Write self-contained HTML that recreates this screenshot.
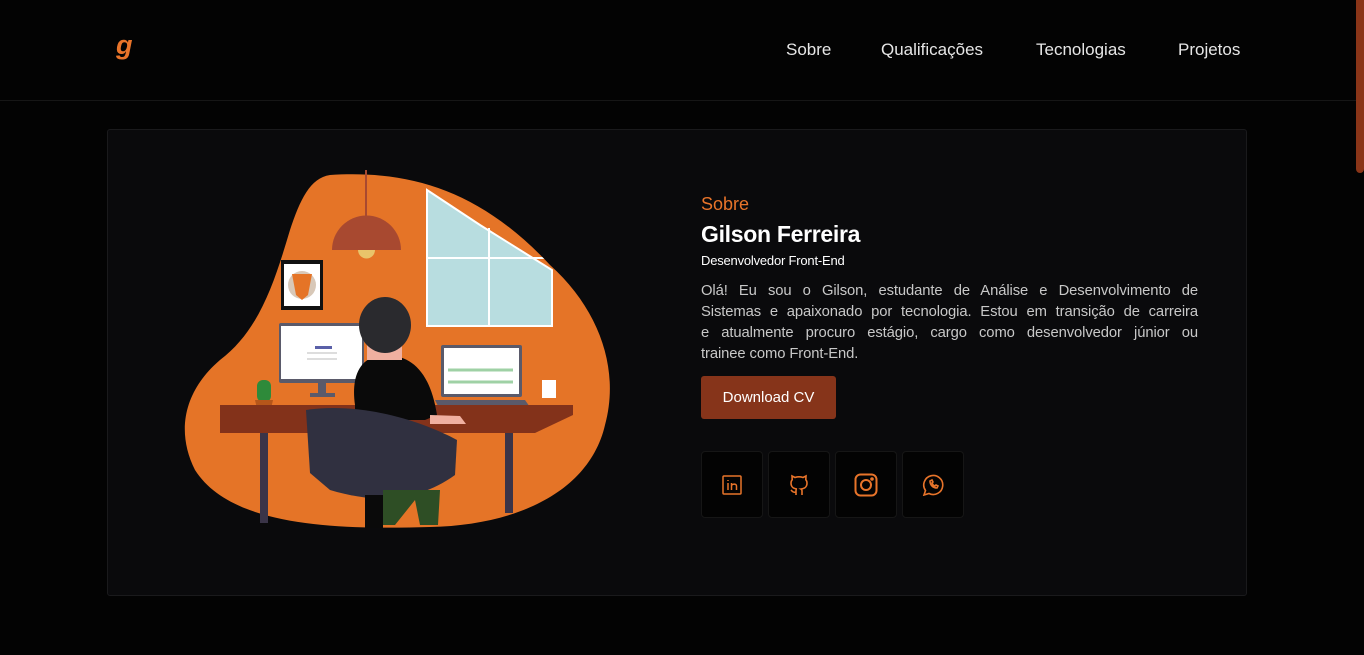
<!DOCTYPE html>
<html><head><meta charset="utf-8"><style>
*{margin:0;padding:0;box-sizing:border-box}
body{width:1364px;height:655px;background:#030303;font-family:"Liberation Sans",sans-serif;overflow:hidden;position:relative}
.hdr{position:absolute;left:0;top:0;width:1356px;height:101px;border-bottom:1px solid #161616}
.logo{position:absolute;left:116px;top:30px;color:#e8742a;font:italic bold 27px "Liberation Sans",sans-serif}
.nav a{position:absolute;top:40px;color:#e6e6e6;font-size:17px;text-decoration:none}
.sb{position:absolute;right:0;top:0;width:8px;height:173px;background:#8a3518;border-radius:0 0 4px 4px}
.card{position:absolute;left:107px;top:129px;width:1140px;height:467px;background:#0a0a0c;border:1px solid #1a1a1c;border-radius:3px}
.t1{position:absolute;left:701px;top:194px;color:#e8742a;font-size:18px}
.t2{position:absolute;left:701px;top:221px;color:#fff;font-size:23px;font-weight:bold;letter-spacing:-0.3px}
.t3{position:absolute;left:701px;top:253px;color:#fff;font-size:13px;letter-spacing:-0.2px}
.p{position:absolute;left:701px;top:281px;width:497px;color:#c8c8c8;font-size:14.8px;line-height:21px;letter-spacing:-0.1px}
.p div{text-align:justify;text-align-last:justify;white-space:nowrap}
.p div:last-child{text-align-last:left}
.btn{position:absolute;left:701px;top:376px;width:135px;height:43px;background:#86341a;border-radius:3px;color:#fff;font-size:15px;text-align:center;line-height:43px}
.ic{position:absolute;top:451px;width:62px;height:67px;background:#030303;border:1px solid #161616;border-radius:4px;display:flex;align-items:center;justify-content:center}
</style></head><body>
<div class="hdr"><div class="logo">g</div>
<div class="nav"><a style="left:786px">Sobre</a><a style="left:881px">Qualificações</a><a style="left:1036px">Tecnologias</a><a style="left:1178px">Projetos</a></div></div>
<div class="sb"></div>
<div class="card"></div>
<svg style="position:absolute;left:180px;top:170px" width="440" height="360" viewBox="0 0 440 360">
<defs><clipPath id="b"><path d="M150 5 C230 0 300 20 370 95 C420 140 440 200 425 255 C410 320 340 355 250 357 C150 360 50 355 15 300 C-5 260 5 220 40 190 C80 160 95 110 110 60 C120 30 130 8 150 5Z"/></clipPath></defs>
<path d="M150 5 C230 0 300 20 370 95 C420 140 440 200 425 255 C410 320 340 355 250 357 C150 360 50 355 15 300 C-5 260 5 220 40 190 C80 160 95 110 110 60 C120 30 130 8 150 5Z" fill="#e57427"/>
<rect x="185" y="0" width="2" height="48" fill="#a84930"/>
<path d="M152 80 A34 34 0 0 1 221 80Z" fill="#a84930"/><path d="M178 80 A8 8 0 0 0 195 80Z" fill="#e9c46a"/>
<g clip-path="url(#b)"><path d="M247 20 L300 55 L372 100 L372 156 L247 156Z" fill="#b8dde0" stroke="#fff" stroke-width="2"/>
<path d="M247 88 L372 88 M309 58 L309 156" stroke="#fff" stroke-width="2"/></g>
<rect x="101" y="90" width="42" height="50" fill="#111"/><rect x="104" y="94" width="36" height="42" fill="#fff"/>
<circle cx="122" cy="115" r="14" fill="#d8c8b8"/><path d="M112 104 L132 104 L128 125 L122 130 L116 125Z" fill="#e57427"/>
<rect x="99" y="153" width="85" height="60" rx="2" fill="#5a5a6a"/><rect x="101" y="156" width="81" height="53" fill="#fff"/>
<rect x="135" y="176" width="17" height="3" fill="#5a60a8"/><rect x="127" y="182" width="30" height="2" fill="#ddd"/><rect x="127" y="188" width="30" height="2" fill="#ddd"/>
<rect x="138" y="213" width="8" height="10" fill="#5a5a6a"/><rect x="130" y="223" width="25" height="4" fill="#5a5a6a"/>
<rect x="261" y="175" width="81" height="52" rx="2" fill="#5a5a6a"/><rect x="264" y="178" width="75" height="46" fill="#fff"/>
<path d="M268 200 L333 200 M268 212 L333 212" stroke="#9fd1a5" stroke-width="3"/>
<path d="M255 230 L345 230 L352 240 L260 240Z" fill="#5a5a6a"/>
<rect x="362" y="210" width="14" height="18" fill="#fff"/>
<rect x="77" y="210" width="14" height="22" rx="6" fill="#2e8a3a"/><path d="M75 230 L93 230 L90 243 L78 243Z" fill="#b5561a"/>
<path d="M40 235 L393 235 L393 245 L355 263 L40 263Z" fill="#83321a"/>
<rect x="80" y="263" width="8" height="90" fill="#3a3448"/><rect x="325" y="263" width="8" height="80" fill="#3a3448"/>
<path d="M175 235 C170 200 185 185 205 185 C230 185 250 200 257 245 L245 250 L175 250Z" fill="#0a0a0a"/>
<path d="M250 245 L280 246 L286 254 L250 254Z" fill="#f0b0a0"/>
<rect x="187" y="165" width="35" height="25" fill="#f0b0a0"/>
<ellipse cx="205" cy="155" rx="26" ry="28" fill="#2a2a2e"/>
<path d="M126 240 C180 232 240 250 277 270 L275 305 C240 330 200 335 150 320 L130 303Z" fill="#303040"/>
<rect x="185" y="325" width="18" height="33" fill="#0a0a0a"/><path d="M203 320 L260 320 L258 355 L240 355 L235 330 L215 355 L203 355Z" fill="#2e4e25"/>
</svg>
<div class="t1">Sobre</div><div class="t2">Gilson Ferreira</div><div class="t3">Desenvolvedor Front-End</div>
<div class="p"><div>Olá! Eu sou o Gilson, estudante de Análise e Desenvolvimento de</div><div>Sistemas e apaixonado por tecnologia. Estou em transição de carreira</div><div>e atualmente procuro estágio, cargo como desenvolvedor júnior ou</div><div>trainee como Front-End.</div></div>
<div class="btn">Download CV</div>
<div class="ic" style="left:701px"><svg width="20" height="20" viewBox="0 0 20 20" fill="none" stroke="#e8742a" stroke-width="1.5"><rect x="1" y="1" width="18" height="18" rx="1"/><path d="M6 8v7M6 5v1M9.5 8v7M9.5 11c0-2 5-3 5 0v4"/></svg></div>
<div class="ic" style="left:768px"><svg width="22" height="24" viewBox="0 0 22 24" fill="none" stroke="#e8742a" stroke-width="1.6"><path d="M8 22v-4c0-2 1-2 1-2-4-.5-6-2-6-6 0-1.5.5-2.5 1.2-3.3L4 3l3 1.5c2.5-.8 5.5-.8 8 0L18 3l-.2 3.7c.7.8 1.2 1.8 1.2 3.3 0 4-2 5.5-6 6 0 0 1 .5 1 2v4M8 19c-3 1-4-1-5-2"/></svg></div>
<div class="ic" style="left:835px"><svg width="24" height="24" viewBox="0 0 24 24" fill="none" stroke="#e8742a" stroke-width="2"><rect x="1.5" y="1.5" width="21" height="21" rx="5"/><circle cx="12" cy="12" r="5"/><circle cx="18" cy="6" r=".8" fill="#e8742a"/></svg></div>
<div class="ic" style="left:902px"><svg width="22" height="22" viewBox="0 0 22 22" fill="none" stroke="#e8742a" stroke-width="1.6"><path d="M2 21l1.5-4.5A9.5 9.5 0 1 1 7 19.5Z"/><path d="M8 7c0 4 3 7 7 7l1-2-2-1-1 1c-1.5-.5-2.5-1.5-3-3l1-1-1-2Z"/></svg></div>
</body></html>
